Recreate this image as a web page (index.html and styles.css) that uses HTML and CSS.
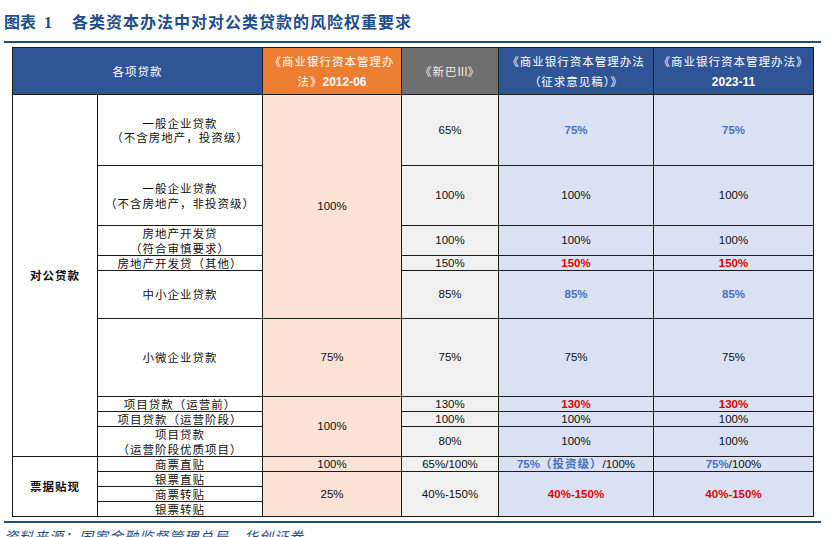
FILE: index.html
```html
<!DOCTYPE html>
<html lang="zh-CN">
<head>
<meta charset="utf-8">
<title>各类资本办法中对对公类贷款的风险权重要求</title>
<link rel="stylesheet" href="styles.css">
</head>
<body>
<div class="page">
  <div class="title"><span class="fig">图表 <span class="fignum">1</span></span><span class="caption">各类资本办法中对对公类贷款的风险权重要求</span></div>
  <div class="rule"></div>
  <div class="table-wrap">
    <table class="grid">
      <colgroup>
        <col class="c1"><col class="c2"><col class="c3"><col class="c4"><col class="c5"><col class="c6">
      </colgroup>
      <thead>
        <tr class="h-head">
          <th colspan="2" class="hd-blue cjk">各项贷款</th>
          <th class="hd-orange cjk">《商业银行资本管理办<br>法》<b class="num">2012-06</b></th>
          <th class="hd-gray cjk">《新巴<span class="num">III</span>》</th>
          <th class="hd-blue cjk">《商业银行资本管理办法<br>（征求意见稿）》</th>
          <th class="hd-blue cjk">《商业银行资本管理办法》<br><b class="num">2023-11</b></th>
        </tr>
      </thead>
      <tbody>
        <tr class="r71">
          <td rowspan="9" class="group cjk">对公贷款</td>
          <td class="cjk two">一般企业贷款<br>（不含房地产，投资级）</td>
          <td rowspan="5" class="bg-orange">100%</td>
          <td class="bg-gray">65%</td>
          <td class="bg-blue t-blue">75%</td>
          <td class="bg-blue t-blue">75%</td>
        </tr>
        <tr class="r60">
          <td class="cjk two">一般企业贷款<br>（不含房地产，非投资级）</td>
          <td class="bg-gray">100%</td>
          <td class="bg-blue">100%</td>
          <td class="bg-blue">100%</td>
        </tr>
        <tr class="r30">
          <td class="cjk two">房地产开发贷<br>（符合审慎要求）</td>
          <td class="bg-gray">100%</td>
          <td class="bg-blue">100%</td>
          <td class="bg-blue">100%</td>
        </tr>
        <tr class="r15">
          <td class="cjk">房地产开发贷（其他）</td>
          <td class="bg-gray">150%</td>
          <td class="bg-blue t-red">150%</td>
          <td class="bg-blue t-red">150%</td>
        </tr>
        <tr class="r48">
          <td class="cjk">中小企业贷款</td>
          <td class="bg-gray">85%</td>
          <td class="bg-blue t-blue">85%</td>
          <td class="bg-blue t-blue">85%</td>
        </tr>
        <tr class="r78">
          <td class="cjk">小微企业贷款</td>
          <td class="bg-orange">75%</td>
          <td class="bg-gray">75%</td>
          <td class="bg-blue">75%</td>
          <td class="bg-blue">75%</td>
        </tr>
        <tr class="r15">
          <td class="cjk">项目贷款（运营前）</td>
          <td rowspan="3" class="bg-orange">100%</td>
          <td class="bg-gray">130%</td>
          <td class="bg-blue t-red">130%</td>
          <td class="bg-blue t-red">130%</td>
        </tr>
        <tr class="r15">
          <td class="cjk">项目贷款（运营阶段）</td>
          <td class="bg-gray">100%</td>
          <td class="bg-blue">100%</td>
          <td class="bg-blue">100%</td>
        </tr>
        <tr class="r30">
          <td class="cjk two">项目贷款<br>（运营阶段优质项目）</td>
          <td class="bg-gray">80%</td>
          <td class="bg-blue">100%</td>
          <td class="bg-blue">100%</td>
        </tr>
        <tr class="r15">
          <td rowspan="4" class="group cjk">票据贴现</td>
          <td class="cjk">商票直贴</td>
          <td class="bg-orange">100%</td>
          <td class="bg-gray">65%/100%</td>
          <td class="bg-blue"><span class="t-blue">75%<span class="cjk">（投资级）</span></span>/100%</td>
          <td class="bg-blue"><span class="t-blue">75%</span>/100%</td>
        </tr>
        <tr class="r15">
          <td class="cjk">银票直贴</td>
          <td rowspan="3" class="bg-orange">25%</td>
          <td rowspan="3" class="bg-gray">40%-150%</td>
          <td rowspan="3" class="bg-blue t-red">40%-150%</td>
          <td rowspan="3" class="bg-blue t-red">40%-150%</td>
        </tr>
        <tr class="r15">
          <td class="cjk">商票转贴</td>
        </tr>
        <tr class="r15">
          <td class="cjk">银票转贴</td>
        </tr>
      </tbody>
    </table>
  </div>
  <div class="rule rule-bottom"></div>
  <div class="source">资料来源：国家金融监督管理总局，华创证券</div>
</div>
</body>
</html>
```

FILE: styles.css
```css
html, body {
  margin: 0;
  padding: 0;
  background: #ffffff;
}

body {
  font-family: "Liberation Sans", "Noto Sans CJK SC", sans-serif;
  color: #111111;
  overflow: hidden;
}

.page {
  width: 817px;
  padding-left: 4px;
}

.title {
  height: 41px;
  display: flex;
  align-items: center;
  color: #1f4e8c;
  font-family: "Liberation Serif", "Noto Sans CJK SC", serif;
  font-weight: bold;
  font-size: 16px;
  white-space: nowrap;
}

.fig {
  width: 68px;
  letter-spacing: 0;
}

.fignum {
  margin-left: 4px;
}

.caption {
  font-family: "Noto Sans CJK SC", sans-serif;
  letter-spacing: 1px;
}

.rule {
  height: 2px;
  background: #1f4e79;
}

.table-wrap {
  padding: 4px 0 0 8px;
}

.grid {
  border-collapse: collapse;
  table-layout: fixed;
  width: 801px;
}

.c1 { width: 85px; }
.c2 { width: 165px; }
.c3 { width: 139px; }
.c4 { width: 97px; }
.c5 { width: 155px; }
.c6 { width: 160px; }

.grid th,
.grid td {
  border: 1px solid #1c1c1c;
  padding: 0;
  text-align: center;
  vertical-align: middle;
  font-size: 11.5px;
  line-height: 13px;
  font-weight: normal;
  overflow: hidden;
  white-space: nowrap;
}

.grid .cjk {
  font-family: "Noto Sans CJK SC", "Liberation Sans", sans-serif;
  font-size: 11.5px;
  letter-spacing: 1px;
}

.grid td.two {
  line-height: 14.5px;
}

.grid th {
  color: #ffffff;
  line-height: 20px;
}

.h-head { height: 47px; }
.r71 { height: 71px; }
.r60 { height: 60px; }
.r30 { height: 30px; }
.r15 { height: 15px; }
.r48 { height: 48px; }
.r78 { height: 78px; }

.grid .num {
  font-family: "Liberation Sans", sans-serif;
  font-size: 12px;
  letter-spacing: 0;
}

.grid b.num {
  font-weight: bold;
}

.hd-blue { background: #2f5597; }
.hd-orange { background: #ed7d31; }
.grid th.hd-gray { background: #6f6f6f; color: #eeeeee; }

.bg-orange { background: #fbe2d5; }
.bg-gray { background: #f0f0f0; }
.bg-blue { background: #d9e1f2; }

.grid td.group {
  font-weight: bold;
  background: #ffffff;
}

.grid .t-blue {
  color: #4472c4;
  font-weight: bold;
}

.grid .t-red {
  color: #e00000;
  font-weight: bold;
}

.rule-bottom {
  margin-top: 4px;
}

.source {
  margin-top: 5px;
  color: #1f4e8c;
  font-family: "Noto Sans CJK SC", sans-serif;
  font-style: italic;
  font-size: 14px;
  line-height: 16px;
  letter-spacing: 1px;
  white-space: nowrap;
}
```
